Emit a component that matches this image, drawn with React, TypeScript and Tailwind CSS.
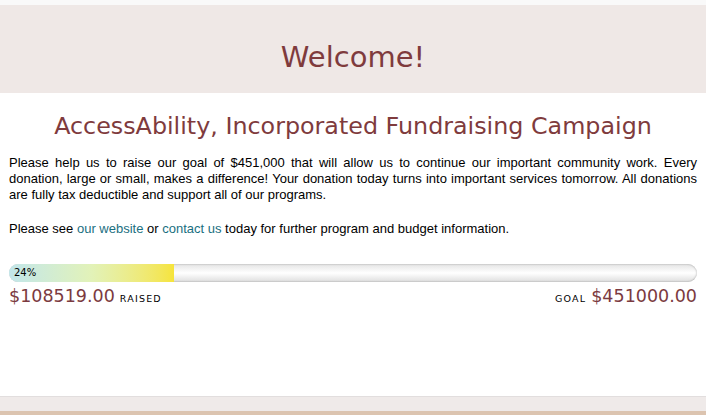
import React from 'react';

const raised = 108519;
const goal = 451000;

export default function App() {
    const pct = Math.round((raised / goal) * 100);

    return (
        <div className="flex h-[415px] w-[706px] flex-col overflow-hidden bg-white">
            <div className="h-[5px] bg-[#f9f9f9]" />

            {/* Header band */}
            <div className="flex h-[88px] items-center justify-center bg-[#efe8e6] pt-[16px]">
                <h1 className="font-['DejaVu_Sans',sans-serif] text-[29px] leading-none text-[#7f3b3d]">Welcome!</h1>
            </div>

            <div className="flex flex-1 flex-col px-[9px]">
                <h2 className="mt-[20px] text-center font-['DejaVu_Sans',sans-serif] text-[23.8px] leading-[27px] text-[#7f3b3d]">
                    AccessAbility, Incorporated Fundraising Campaign
                </h2>

                <p className="mt-[15px] text-justify font-['Liberation_Sans',Arial,sans-serif] text-[13px] leading-[16px] text-black">
                    Please help us to raise our goal of $451,000 that will allow us to continue our important community work. Every
                    donation, large or small, makes a difference! Your donation today turns into important services tomorrow. All donations
                    are fully tax deductible and support all of our programs.
                </p>

                <p className="mt-[18px] font-['Liberation_Sans',Arial,sans-serif] text-[13px] leading-[16px] text-black">
                    Please see <a className="text-[#1a6f7f]">our website</a> or <a className="text-[#1a6f7f]">contact us</a> today for further program and budget information.
                </p>

                {/* Progress bar */}
                <div className="relative mt-[27px] h-[18px] overflow-hidden rounded-full bg-gradient-to-b from-[#e4e4e4] via-white to-[#dedede] shadow-[inset_0_0_2px_rgba(0,0,0,0.35)]">
                    <div
                        className="h-full bg-gradient-to-r from-[#c2e6ea] via-[#e2f2b8] to-[#f6e43a]"
                        style={{ width: `${pct}%` }}
                    />
                    <span className="absolute left-[5px] top-0 font-['DejaVu_Sans',sans-serif] text-[10px] leading-[18px] text-black">{pct}%</span>
                </div>

                <div className="mt-[1px] flex items-baseline justify-between font-['DejaVu_Sans',sans-serif] text-[#7b3a40]">
                    <div className="flex items-baseline gap-[5px]">
                        <span className="text-[17.5px]">${raised.toFixed(2)}</span>
                        <span className="text-[9.5px] tracking-[1.2px] text-black">RAISED</span>
                    </div>
                    <div className="flex items-baseline gap-[5px]">
                        <span className="text-[9.5px] tracking-[1.2px] text-black">GOAL</span>
                        <span className="text-[17.5px]">${goal.toFixed(2)}</span>
                    </div>
                </div>
            </div>

            {/* Footer band */}
            <div className="h-[15px] border-t border-[#e2dede] bg-[#efeae9]" />
            <div className="h-[4px] bg-[#dcc4b0]" />
        </div>
    );
}
